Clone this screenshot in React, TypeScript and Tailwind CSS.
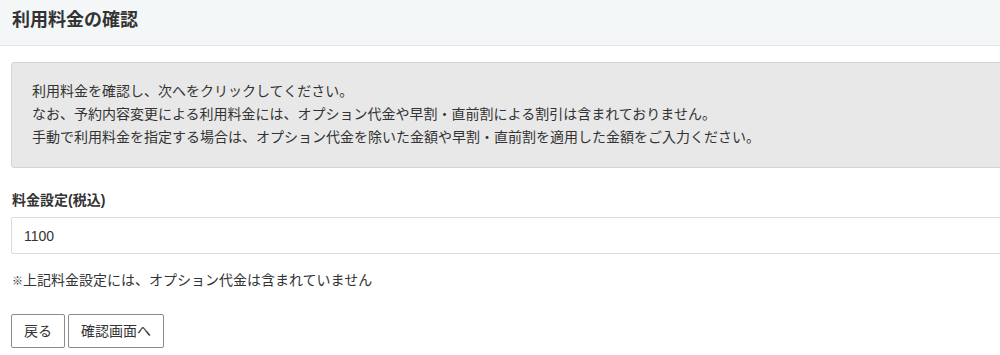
export default function App() {
  const notes = [
    "利用料金を確認し、次へをクリックしてください。",
    "なお、予約内容変更による利用料金には、オプション代金や早割・直前割による割引は含まれておりません。",
    "手動で利用料金を指定する場合は、オプション代金を除いた金額や早割・直前割を適用した金額をご入力ください。",
  ];

  return (
    <div
      className="min-h-[355px] w-full overflow-hidden bg-white text-[#333]"
      style={{ fontFamily: '"Liberation Sans", "Noto Sans CJK JP", sans-serif' }}
    >
      <header className="h-[46px] border-b border-[#e2e8ea] bg-[#f3f7f8] px-3">
        <h1 className="text-[18px] font-bold leading-[40px] text-[#333]">利用料金の確認</h1>
      </header>

      <main className="w-[1060px] px-[11px] pt-[16px]">
        <div className="rounded-[3px] border border-[#d4d4d4] bg-[#e8e8e8] pb-[18px] pl-[20px] pt-[17px] text-[14px] leading-[23px]">
          {notes.map((line) => (
            <p key={line}>{line}</p>
          ))}
        </div>

        <label className="mt-[22px] block pl-px text-[14px] font-bold leading-[20px]">料金設定(税込)</label>
        <input
          type="text"
          defaultValue="1100"
          className="mt-[7px] block h-[37px] w-full rounded-[2px] border border-[#dcdcdc] bg-white px-3 text-[14px] text-[#333] outline-none"
        />

        <p className="mt-[16px] pl-px text-[14px] leading-[20px]">
          <span className="text-[11px]">※</span>上記料金設定には、オプション代金は含まれていません
        </p>

        <div className="mt-[23px] flex gap-[3px]">
          <button className="h-[34px] rounded-[2px] border border-[#8c8c8c] bg-white px-3 text-[14px] leading-[32px] text-[#333]">
            戻る
          </button>
          <button className="h-[34px] rounded-[2px] border border-[#8c8c8c] bg-white px-3 text-[14px] leading-[32px] text-[#333]">
            確認画面へ
          </button>
        </div>
      </main>
    </div>
  );
}
